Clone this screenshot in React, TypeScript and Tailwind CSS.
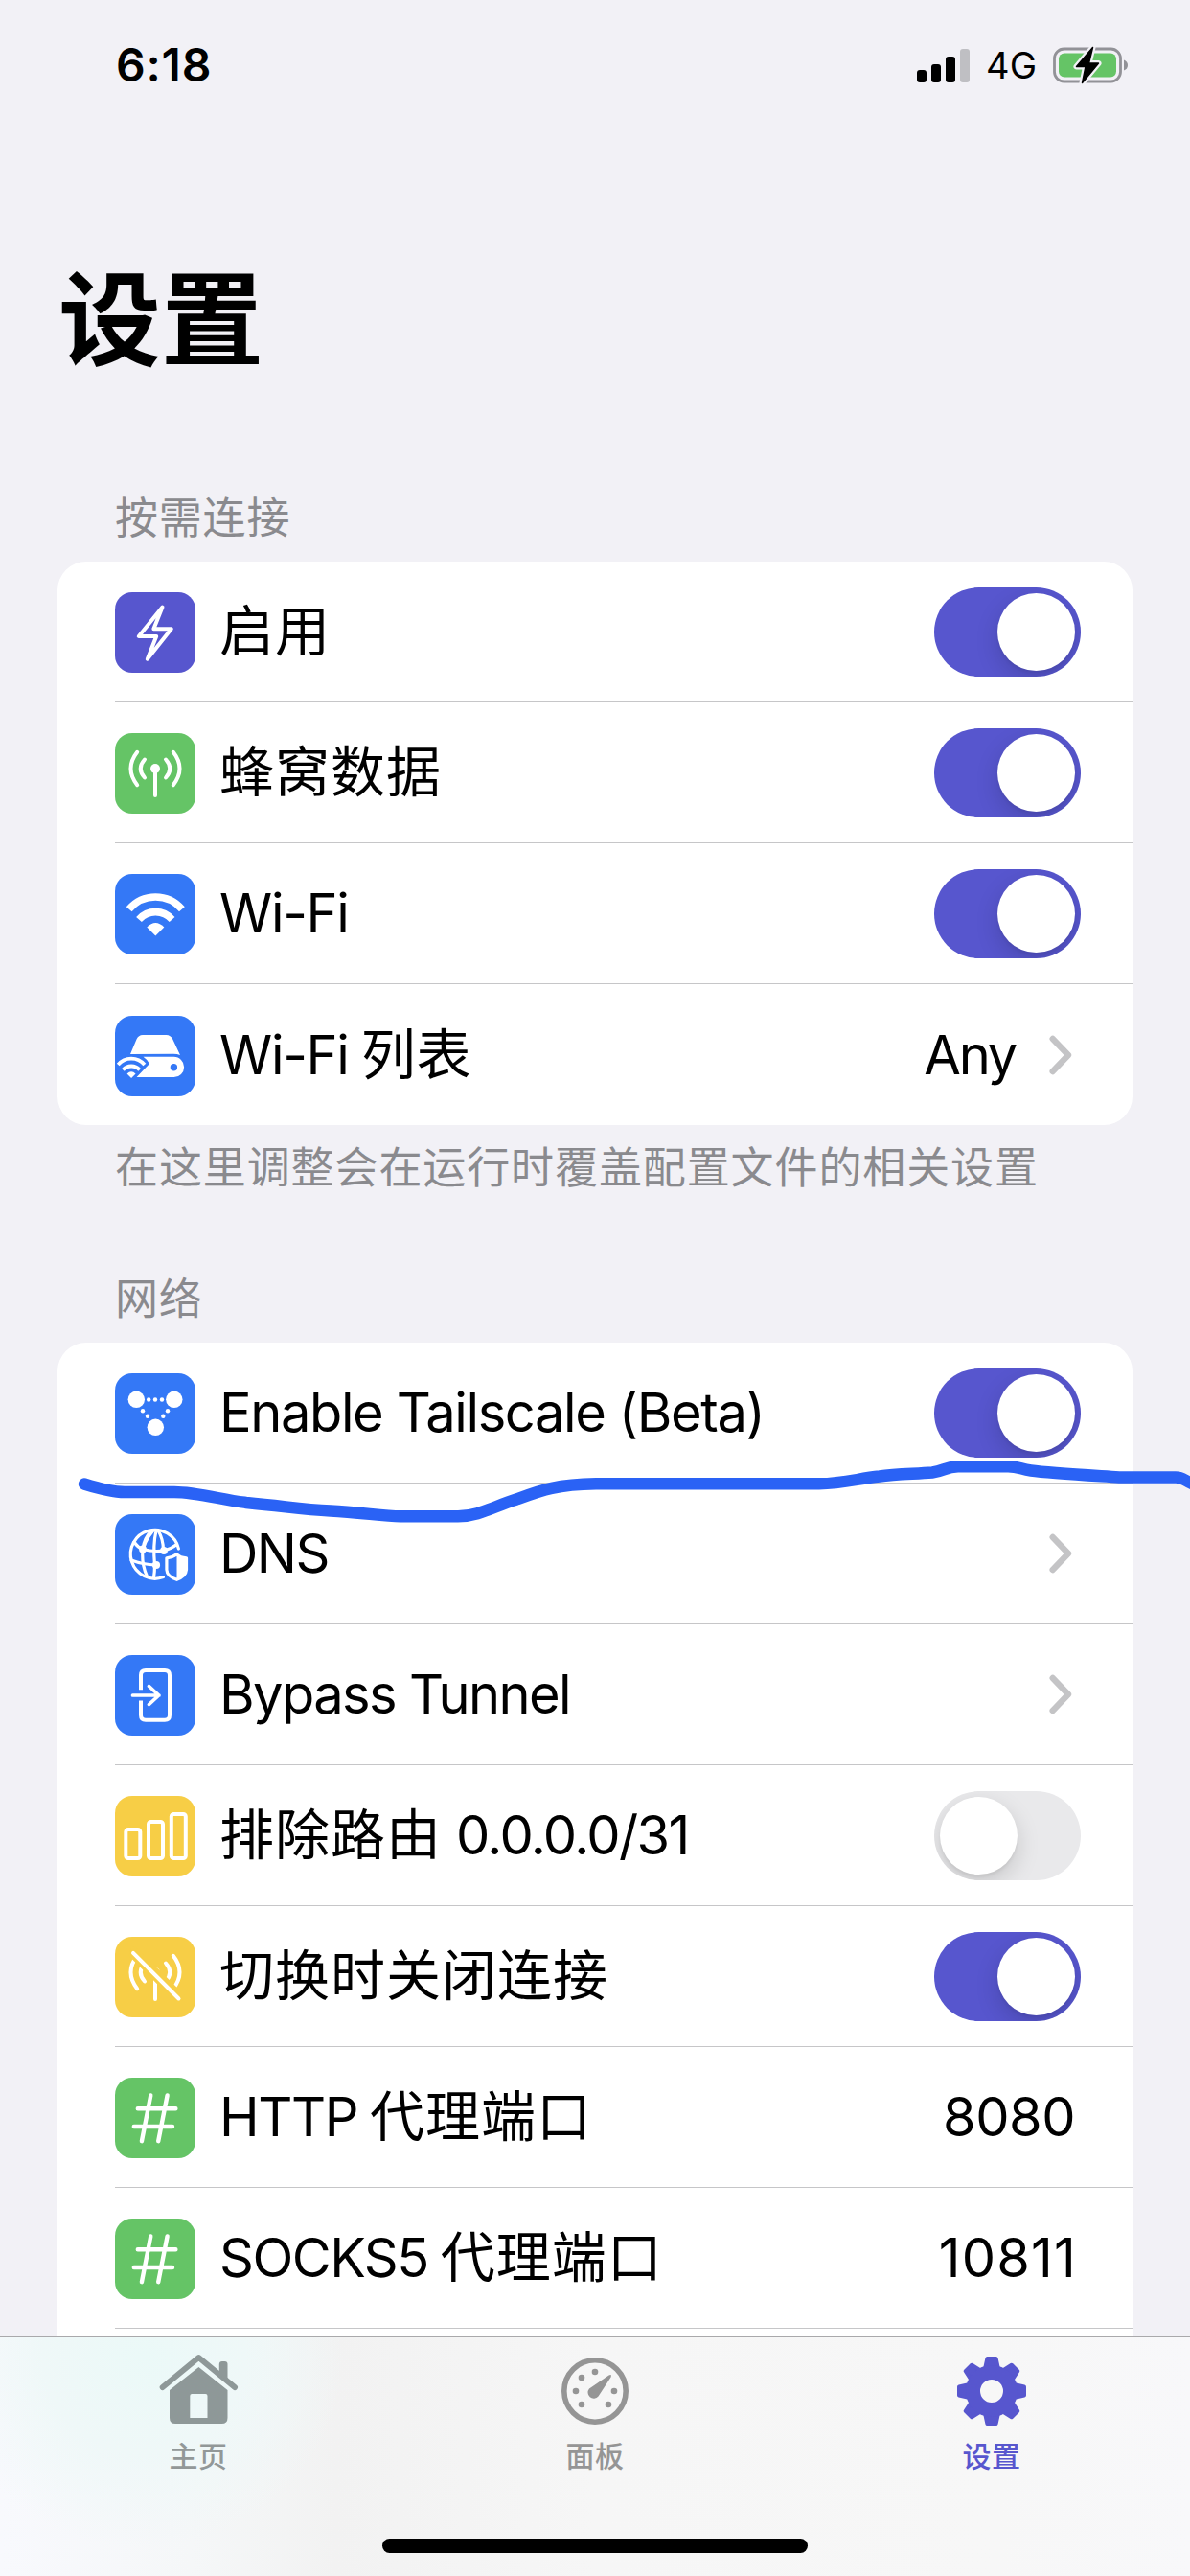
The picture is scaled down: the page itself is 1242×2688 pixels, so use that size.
import React from "react";

const Wave = () => (
  <g fill="none" stroke="#fff" strokeWidth={4} strokeLinecap="round">
    <path d="M31 27.5Q22.5 37 31 46.5M53 27.5Q61.5 37 53 46.5" />
    <path d="M23.2 19.8Q9.8 37 23.2 54.2M60.8 19.8Q74.2 37 60.8 54.2" />
    <path d="M42 38V65" />
    <circle cx={42} cy={37} r={5} fill="#fff" stroke="none" />
  </g>
);

const WifiShape = () => (
  <g>
    <path d="M14.7 36.8A36.2 36.2 0 0 1 69.9 36.8" fill="none" stroke="#fff" strokeWidth={7.6} />
    <path d="M25 47.5A22.9 22.9 0 0 1 59.6 47.5" fill="none" stroke="#fff" strokeWidth={7.6} />
    <path d="M33.3 55.6Q42.3 46.4 51.3 55.6L42.3 64.4Z" fill="#fff" />
  </g>
);

const icons: Record<string, React.ReactNode> = {
  bolt: (
    <path
      d="M49.5 15.5L24.8 46H43.2L33.8 69.8L58.8 38.3H40.4Z"
      fill="none"
      stroke="#fff"
      strokeWidth={4}
      strokeLinejoin="round"
    />
  ),
  cell: <Wave />,
  wifi: <WifiShape />,
  drive: (
    <g>
      <path d="M16 40L22.5 24.5Q24.5 20 29 20H53.5Q58 20 60.3 24.5L68 41Q65 39.8 61 39.8Z" fill="#fff" />
      <path
        fillRule="evenodd"
        d="M29.5 42.8H61.5A10.6 10.6 0 0 1 61.5 64H22.6L36 50Q33.5 45.5 29.5 42.8ZM61.4 50A3.7 3.7 0 1 0 61.4 57.4A3.7 3.7 0 1 0 61.4 50Z"
        fill="#fff"
      />
      <g transform="translate(-4.1 32.7) scale(.5)">
        <WifiShape />
      </g>
    </g>
  ),
  nodes: (
    <g fill="#fff">
      <circle cx={22.3} cy={27.3} r={8.7} />
      <circle cx={61.8} cy={27.3} r={8.7} />
      <circle cx={42.3} cy={56.3} r={8.7} />
      <circle cx={35.2} cy={27.5} r={2.2} />
      <circle cx={42} cy={27.5} r={2.2} />
      <circle cx={49} cy={27.5} r={2.2} />
      <circle cx={29} cy={39.3} r={2.2} />
      <circle cx={34} cy={44.8} r={2.2} />
      <circle cx={55} cy={39.3} r={2.2} />
      <circle cx={50.3} cy={44.8} r={2.2} />
    </g>
  ),
  globe: (
    <g fill="none" stroke="#fff" strokeWidth={3.2} strokeLinecap="round">
      <path d="M66.4 36A25.4 25.4 0 1 0 50.5 65.6" />
      <path d="M40 17Q29.5 29 28.7 42Q28.5 54 33.5 65" />
      <path d="M43 17Q39.5 32 41.5 53Q41.5 60 40.5 66" />
      <path d="M45 17Q50.5 26 50.5 38" />
      <path d="M38 17.5Q31 24 29 36" />
      <path d="M20 29Q24 35 29 36.5Q40 39.5 51 38Q59 36 64.5 31.5" />
      <path d="M17 48Q29 52.5 42.5 53" />
      <g fill="#fff" stroke="none">
        <circle cx={29} cy={36.5} r={3.9} />
        <circle cx={51} cy={38} r={3.9} />
        <circle cx={43} cy={53} r={4.1} />
      </g>
      <path d="M64.5 42.5Q69 46 74.2 46V58Q74 64.5 64.5 68Q54.5 64.5 54.2 58V46Q59.5 46 64.5 42.5Z" stroke="#3478f6" strokeWidth={8} fill="#3478f6" />
      <path d="M64.5 41.8Q68 45.2 74.5 45.8V58Q74 64.8 64.5 68.3Q54.2 64.8 53.9 58V45.8Q60 45.2 64.5 41.8Z" strokeWidth={3.2} strokeLinejoin="round" />
      <path d="M64.5 41.8Q68 45.2 74.5 45.8V58Q74 64.8 64.5 68.3Z" fill="#fff" stroke="none" />
    </g>
  ),
  enter: (
    <g fill="none" stroke="#fff" strokeWidth={4} strokeLinecap="round" strokeLinejoin="round">
      <path
        strokeLinecap="butt"
        d="M27 36.3V21Q27 16 32 16H52Q57 16 57 21V62.7Q57 67.7 52 67.7H32Q27 67.7 27 62.7V47.5"
      />
      <path d="M18.5 42H46M35.5 32.5L45.8 42L35.5 51.5" strokeWidth={3.7} />
    </g>
  ),
  bars: (
    <g fill="none" stroke="#fff" strokeWidth={4}>
      <rect x={11.3} y={35} width={15} height={30} rx={2.5} />
      <rect x={35} y={27} width={15} height={38} rx={2.5} />
      <rect x={58.8} y={19} width={15} height={46} rx={2.5} />
    </g>
  ),
  cellOff: (
    <g strokeLinecap="round">
      <Wave />
      <path d="M20 14.5L69 62.5" stroke="#f7ce46" strokeWidth={8} />
      <path d="M17 19L65 66.5" stroke="#f7ce46" strokeWidth={5} />
      <circle cx={42} cy={39} r={6} fill="#f7ce46" />
      <path d="M19 16.8L66.5 64.5" stroke="#fff" strokeWidth={4} />
    </g>
  ),
  hash: (
    <path
      d="M37.3 18.5L27.9 66.2M54.6 18.5L45.2 66.2M23.8 32.3H63.4M19.8 51H60"
      fill="none"
      stroke="#fff"
      strokeWidth={4.4}
      strokeLinecap="round"
    />
  ),
};

const Toggle = ({ on }: { on: boolean }) => (
  <div
    className={
      on
        ? "flex h-[93px] w-[153px] shrink-0 items-center justify-end overflow-hidden rounded-full bg-[#5756ce] p-[6px]"
        : "flex h-[93px] w-[153px] shrink-0 items-center justify-start overflow-hidden rounded-full bg-[#e9e9eb] p-[6px]"
    }
  >
    <div className="size-[81px] rounded-full bg-white shadow-[0_9px_24px_rgba(0,0,0,0.15),0_3px_3px_rgba(0,0,0,0.05)]" />
  </div>
);

const Chevron = () => (
  <svg className="h-[42px] w-[24px] shrink-0" viewBox="0 0 24 42" fill="none" stroke="#c4c4c6" strokeWidth={6.4} strokeLinecap="round" strokeLinejoin="round">
    <path d="M3.7 4L20 21L3.7 38" />
  </svg>
);

type RowProps = {
  icon: string;
  color: string;
  latin?: string;
  latinClass?: string;
  cjk?: string;
  tail?: string;
  toggle?: boolean;
  value?: string;
  valueClass?: string;
  chevron?: boolean;
  last?: boolean;
};

const Row = ({ icon, color, latin, latinClass = "", cjk, tail, toggle, value, valueClass = "", chevron, last }: RowProps) => (
  <div className="flex h-[147px] pl-[60px]">
    <div className={last ? "flex flex-1 items-center" : "flex flex-1 items-center border-b border-[#c6c6c8]"}>
      <div className={`mt-[2px] size-[84px] shrink-0 overflow-hidden rounded-[18px] ${color}`}>
        <svg className="size-full" viewBox="0 0 84 84">
          {icons[icon]}
        </svg>
      </div>
      <div className="ml-[25px] flex flex-1 items-baseline whitespace-nowrap">
        {latin && <span className={`text-[56px] leading-[80px] ${latinClass}`}>{latin}</span>}
        {cjk && <span className={latin ? "ml-[13px] text-[57px] leading-[80px] tracking-[1px]" : "text-[57px] leading-[80px] tracking-[1px]"}>{cjk}</span>}
        {tail && <span className="ml-[15px] text-[56px] leading-[80px] tracking-[-1.6px]">{tail}</span>}
      </div>
      {value && <span className={`text-[56px] leading-[80px] ${valueClass}`}>{value}</span>}
      {chevron && (
        <div className="mr-[63px]">
          <Chevron />
        </div>
      )}
      {toggle !== undefined && (
        <div className="mr-[54px]">
          <Toggle on={toggle} />
        </div>
      )}
    </div>
  </div>
);

const StatusBar = () => (
  <div className="flex h-[136px] shrink-0 items-center justify-between pl-[121px] pr-[64px]">
    <span className="text-[48px] font-semibold leading-[60px] tracking-[0.8px]">6:18</span>
    <div className="flex items-center">
      <div className="flex h-[35px] items-end gap-[5px]">
        <div className="h-[13px] w-[10px] rounded-[3px] bg-black" />
        <div className="h-[19px] w-[10px] rounded-[3px] bg-black" />
        <div className="h-[27px] w-[10px] rounded-[3px] bg-black" />
        <div className="h-[35px] w-[10px] rounded-[3px] bg-[#bfbfc3]" />
      </div>
      <span className="ml-[17px] w-[70px] text-[38px] leading-[50px] tracking-[0.3px]">4G</span>
      <svg className="h-[42px] w-[79px]" viewBox="0 0 79 42">
        <rect x={1.5} y={4} width={69} height={34} rx={10} fill="none" stroke="#929297" strokeWidth={2.8} />
        <rect x={6} y={8.5} width={60} height={25} rx={6} fill="#65c466" />
        <path d="M74 15.5Q78 17 78 21Q78 25 74 26.5Z" fill="#929297" />
        <path d="M41.5 2.5L24.5 22.5H34L30.5 39.5L47.5 19H37.5Z" fill="#000" stroke="#f2f1f6" strokeWidth={6} strokeLinejoin="round" />
        <path d="M41.5 2.5L24.5 22.5H34L30.5 39.5L47.5 19H37.5Z" fill="#000" stroke="#000" strokeWidth={1.5} strokeLinejoin="round" />
      </svg>
    </div>
  </div>
);

const House = () => (
  <svg className="h-[74px] w-[85px]" viewBox="0 0 85 74" fill="#8e9898">
    <path d="M4.7 35L42.4 4L80 35" fill="none" stroke="#8e9898" strokeWidth={6} strokeLinecap="round" strokeLinejoin="round" />
    <path d="M63.8 22V11Q63.8 8 66.8 8H69.5Q72.5 8 72.5 11V29Z" />
    <path fillRule="evenodd" d="M42.4 14L72.5 38V67Q72.5 73 66.5 73H18Q12 73 12 67V38ZM33.3 44V67H51.5V44Q51.5 42 49.5 42H35.3Q33.3 42 33.3 44Z" />
  </svg>
);

const Gauge = () => (
  <svg className="mt-[4px] size-[70px]" viewBox="-35 -35 70 70" fill="#959595">
    <circle r={32.2} fill="none" stroke="#959595" strokeWidth={5.6} />
    <circle cx={-20} cy={0} r={3.3} />
    <circle cx={-14} cy={-14} r={3.3} />
    <circle cx={-14} cy={14} r={3.3} />
    <circle cx={0} cy={-20} r={3.3} />
    <circle cx={20} cy={0} r={3.3} />
    <circle cx={14} cy={14} r={3.3} />
    <path d="M-6 -2.5L14.5 -16.5Q18 -18 16.6 -14.5L3.5 5.5A6.2 6.2 0 1 1 -6 -2.5Z" />
  </svg>
);

const Gear = () => (
  <svg className="mt-[4px] size-[72px]" viewBox="-36 -36 72 72">
    <g fill="#5756ce" stroke="#5756ce" strokeWidth={4} strokeLinejoin="round">
      {[0, 45, 90, 135, 180, 225, 270, 315].map((a) => (
        <path key={a} d="M-4.6 -34H4.6L7 -23H-7Z" transform={`rotate(${a})`} />
      ))}
    </g>
    <circle r={19.5} fill="none" stroke="#5756ce" strokeWidth={15} />
  </svg>
);

const Tab = ({ icon, label, color }: { icon: React.ReactNode; label: string; color: string }) => (
  <div className="flex flex-1 flex-col items-center">
    <div className="flex h-[92px] items-end justify-center">
      <div className="flex h-[76px] items-center">{icon}</div>
    </div>
    <span className={`mt-[10px] text-[30px] font-medium leading-[44px] tracking-[0.5px] ${color}`}>{label}</span>
  </div>
);

export default function App() {
  return (
    <div className="relative flex h-[2688px] w-[1242px] flex-col overflow-hidden bg-[#f2f1f6] font-['Inter','Noto_Sans_CJK_SC',sans-serif] text-black">
      <div className="flex min-h-0 flex-1 flex-col overflow-hidden">
        <StatusBar />
        <h1 className="mt-[120px] h-[156px] shrink-0 pl-[61px] text-[107px] font-bold leading-[156px]">设置</h1>
        <h2 className="mt-[99px] h-[60px] shrink-0 pl-[120px] text-[45px] leading-[60px] tracking-[0.8px] text-[#8a8a8e]">按需连接</h2>
        <section className="mx-[60px] mt-[15px] shrink-0 overflow-hidden rounded-[30px] bg-white">
          <Row icon="bolt" color="bg-[#5756ce]" cjk="启用" toggle={true} />
          <Row icon="cell" color="bg-[#65c466]" cjk="蜂窝数据" toggle={true} />
          <Row icon="wifi" color="bg-[#3478f6]" latin="Wi-Fi" latinClass="tracking-[-1.3px]" toggle={true} />
          <Row
            icon="drive"
            color="bg-[#3478f6]"
            latin="Wi-Fi"
            latinClass="tracking-[-1.3px]"
            cjk="列表"
            value="Any"
            valueClass="mr-[35px] tracking-[-2.2px]"
            chevron
            last
          />
        </section>
        <p className="mt-[15px] h-[60px] shrink-0 whitespace-nowrap pl-[120px] text-[45px] leading-[60px] tracking-[0.9px] text-[#8a8a8e]">
          在这里调整会在运行时覆盖配置文件的相关设置
        </p>
        <h2 className="mt-[77px] h-[60px] shrink-0 pl-[120px] text-[45px] leading-[60px] tracking-[0.8px] text-[#8a8a8e]">网络</h2>
        <section className="mx-[60px] mt-[15px] h-[1200px] shrink-0 overflow-hidden rounded-[30px] bg-white">
          <Row icon="nodes" color="bg-[#3478f6]" latin="Enable Tailscale (Beta)" latinClass="tracking-[-1.4px]" toggle={true} />
          <Row icon="globe" color="bg-[#3478f6]" latin="DNS" latinClass="tracking-[-1.6px]" chevron />
          <Row icon="enter" color="bg-[#3478f6]" latin="Bypass Tunnel" latinClass="tracking-[-1.6px]" chevron />
          <Row icon="bars" color="bg-[#f7ce46]" cjk="排除路由" tail="0.0.0.0/31" toggle={false} />
          <Row icon="cellOff" color="bg-[#f7ce46]" cjk="切换时关闭连接" toggle={true} />
          <Row icon="hash" color="bg-[#65c466]" latin="HTTP" latinClass="tracking-[-1.4px]" cjk="代理端口" value="8080" valueClass="mr-[60px] tracking-[-0.5px]" />
          <Row icon="hash" color="bg-[#65c466]" latin="SOCKS5" latinClass="tracking-[-1.5px]" cjk="代理端口" value="10811" valueClass="mr-[58px] tracking-[1.2px]" />
        </section>
      </div>

      <nav className="flex h-[250px] shrink-0 flex-col items-center border-t border-[#a9a9ab] bg-[#f7f7f7] bg-[radial-gradient(ellipse_210px_200px_at_150px_20px,#ebf9f8_0%,#eff8f8_50%,transparent_100%),linear-gradient(90deg,#f8f9fd_0px,#f5f7f8_200px,#f2f2f2_350px,#f6f6f6_620px,#f7f7f7_1040px,#f8f8fa_1242px)]">
        <div className="flex w-full">
          <Tab icon={<House />} label="主页" color="text-[#929898]" />
          <Tab icon={<Gauge />} label="面板" color="text-[#959595]" />
          <Tab icon={<Gear />} label="设置" color="text-[#5756ce]" />
        </div>
        <div className="mt-[64px] h-[15px] w-[444px] rounded-full bg-black" />
      </nav>

      <svg className="pointer-events-none absolute left-0 top-[1500px] h-[110px] w-[1242px]" viewBox="0 1500 1242 110" fill="none">
        <path
          d="M88 1548.5Q115 1557 130 1557H182C205 1557 232 1565 257 1568C300 1572 315 1575 345 1576.5C375 1578 400 1582 418 1582.3H478C500 1582 515 1572 539 1564.5C565 1555 580 1549 622 1548.3H855C880 1548 895 1543 918 1540.5C935 1538 955 1538 973 1536.5C985 1535 987 1530.5 1000 1530.3H1052C1063 1530.3 1065 1533 1076 1534.5C1095 1537 1130 1539 1168 1541.5H1227C1235 1541.5 1235 1544.5 1246 1549"
          stroke="#2a62f5"
          strokeWidth={12.4}
          strokeLinecap="round"
          strokeLinejoin="round"
        />
      </svg>
    </div>
  );
}
